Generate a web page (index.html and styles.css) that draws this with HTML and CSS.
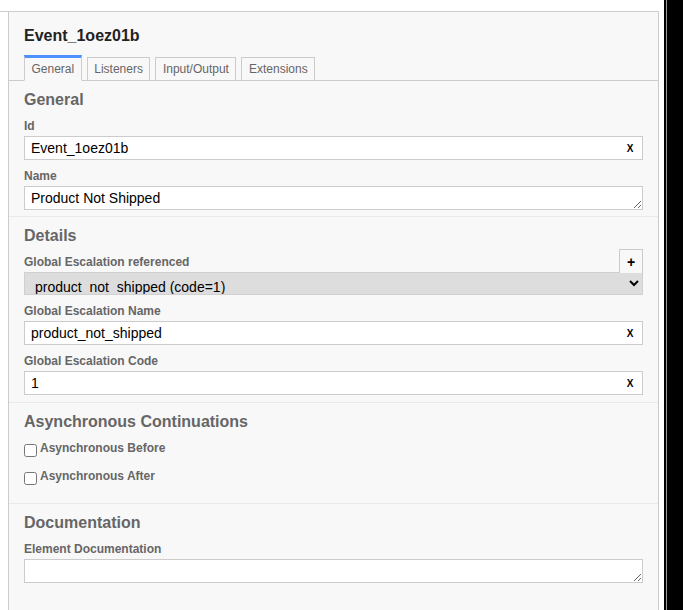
FILE: index.html
```html
<!DOCTYPE html>
<html lang="en">
<head>
<meta charset="utf-8">
<title>Properties</title>
<link rel="stylesheet" href="styles.css">
</head>
<body>
<div class="app">
  <div class="frame">
    <div class="frame-inner">
      <div class="panel">
        <div class="panel-header">
          <div class="title">Event_1oez01b</div>
        </div>
        <div class="tabs">
          <div class="tab active">General</div>
          <div class="tab">Listeners</div>
          <div class="tab">Input/Output</div>
          <div class="tab">Extensions</div>
        </div>

        <div class="section">
          <div class="section-title">General</div>
          <div class="field">
            <label class="label">Id</label>
            <div class="control">
              <input class="input" type="text" value="Event_1oez01b">
              <button class="clear" type="button">X</button>
            </div>
          </div>
          <div class="field">
            <label class="label">Name</label>
            <div class="control">
              <textarea class="textarea">Product Not Shipped</textarea>
            </div>
          </div>
        </div>

        <div class="section">
          <div class="section-title">Details</div>
          <div class="field">
            <div class="label-row">
              <label class="label">Global Escalation referenced</label>
              <button class="add" type="button">+</button>
            </div>
            <select class="select">
              <option>product_not_shipped (code=1)</option>
            </select>
          </div>
          <div class="field">
            <label class="label">Global Escalation Name</label>
            <div class="control">
              <input class="input" type="text" value="product_not_shipped">
              <button class="clear" type="button">X</button>
            </div>
          </div>
          <div class="field field-last">
            <label class="label">Global Escalation Code</label>
            <div class="control">
              <input class="input" type="text" value="1">
              <button class="clear" type="button">X</button>
            </div>
          </div>
        </div>

        <div class="section section-loose">
          <div class="section-title">Asynchronous Continuations</div>
          <div class="check-field">
            <input class="checkbox" type="checkbox" id="ab">
            <label class="check-label" for="ab">Asynchronous Before</label>
          </div>
          <div class="check-field">
            <input class="checkbox" type="checkbox" id="aa">
            <label class="check-label" for="aa">Asynchronous After</label>
          </div>
        </div>

        <div class="section no-border">
          <div class="section-title">Documentation</div>
          <div class="field">
            <label class="label">Element Documentation</label>
            <div class="control">
              <textarea class="textarea"></textarea>
            </div>
          </div>
        </div>
      </div>
    </div>
  </div>
  <div class="edge"></div>
</div>
</body>
</html>
```
FILE: styles.css
```css
* {
  box-sizing: border-box;
}

html, body {
  margin: 0;
  padding: 0;
  background: #fff;
  font-family: "Liberation Sans", Arial, sans-serif;
}

.app {
  display: flex;
  height: 610px;
  overflow: hidden;
}

.frame {
  width: 659px;
  padding-top: 11px;
  flex: none;
  display: flex;
  flex-direction: column;
}

.frame-inner {
  border-top: 1px solid #ccc;
  padding-left: 8px;
  flex: 1;
  display: flex;
}

.panel {
  flex: 1;
  background: #f8f8f8;
  border-left: 1px solid #ccc;
  border-right: 1px solid #ccc;
  padding: 14px 15px 0;
}

.edge {
  flex: none;
  width: 19px;
  margin-left: 5px;
  background: linear-gradient(to right, #000 0 2px, #9a9a9a 2px 3px, #000 3px);
}

.title {
  font-size: 16px;
  line-height: 20px;
  font-weight: bold;
  color: #222;
}

.tabs {
  display: flex;
  align-items: flex-end;
  gap: 5px;
  margin: 9px -15px 0;
  padding-left: 15px;
  border-bottom: 1px solid #ccc;
}

.tab {
  font-size: 12px;
  line-height: 16px;
  color: #666;
  padding: 3px 6.5px;
  border: 1px solid #ccc;
  margin-bottom: -1px;
  background: #f8f8f8;
}

.tab.active {
  border-top: 3px solid #4d90fe;
  border-bottom-color: #f8f8f8;
}

.section {
  margin: 0 -15px;
  padding: 9px 15px 0;
  border-bottom: 1px solid #eaeaea;
}

.section-loose {
  padding-bottom: 9px;
}

.no-border {
  border-bottom: none;
}

.section-title {
  font-size: 16px;
  line-height: 20px;
  font-weight: bold;
  color: #666;
  margin-bottom: 6px;
}

.field {
  margin-bottom: 6px;
}

.field-last {
  margin-bottom: 7px;
}

.label {
  display: block;
  font-size: 12px;
  line-height: 20px;
  font-weight: bold;
  color: #666;
}

.label-row {
  position: relative;
}

.add {
  position: absolute;
  right: 0;
  top: -3px;
  width: 24px;
  height: 24px;
  margin: 0;
  padding: 0;
  border: 1px solid #ccc;
  border-bottom: none;
  background: #f8f8f8;
  font-family: "Liberation Sans", Arial, sans-serif;
  font-size: 14px;
  font-weight: bold;
  line-height: 20px;
  color: #000;
}

.control {
  position: relative;
}

.input,
.textarea {
  display: block;
  width: 100%;
  height: 24px;
  margin: 0;
  border: 1px solid #ccc;
  background: #fff;
  font-family: "Liberation Sans", Arial, sans-serif;
  font-size: 14px;
  color: #000;
  padding: 3px 24px 3px 6px;
  border-radius: 0;
  outline: none;
}

.textarea {
  padding: 2px 6px;
  line-height: 18px;
  resize: vertical;
  overflow: hidden;
}

.clear {
  position: absolute;
  right: 3px;
  top: 0;
  height: 24px;
  width: 20px;
  margin: 0;
  padding: 0;
  border: none;
  background: transparent;
  font-family: "Liberation Sans", Arial, sans-serif;
  font-size: 10px;
  font-weight: bold;
  color: #000;
}

.select {
  display: block;
  width: 100%;
  height: 23px;
  margin: 0;
  border: 1px solid #d0d0d0;
  border-radius: 0;
  background: #dddddd;
  font-family: "Liberation Sans", Arial, sans-serif;
  font-size: 14px;
  line-height: 16px;
  color: #000;
  padding: 5px 4px 0 6px;
}

.check-field {
  display: flex;
  align-items: center;
  height: 20px;
  margin-bottom: 8px;
}

.checkbox {
  width: 13px;
  height: 13px;
  margin: 4px 3px 0 0;
}

.check-label {
  font-size: 12px;
  line-height: 20px;
  font-weight: bold;
  color: #666;
}
```
